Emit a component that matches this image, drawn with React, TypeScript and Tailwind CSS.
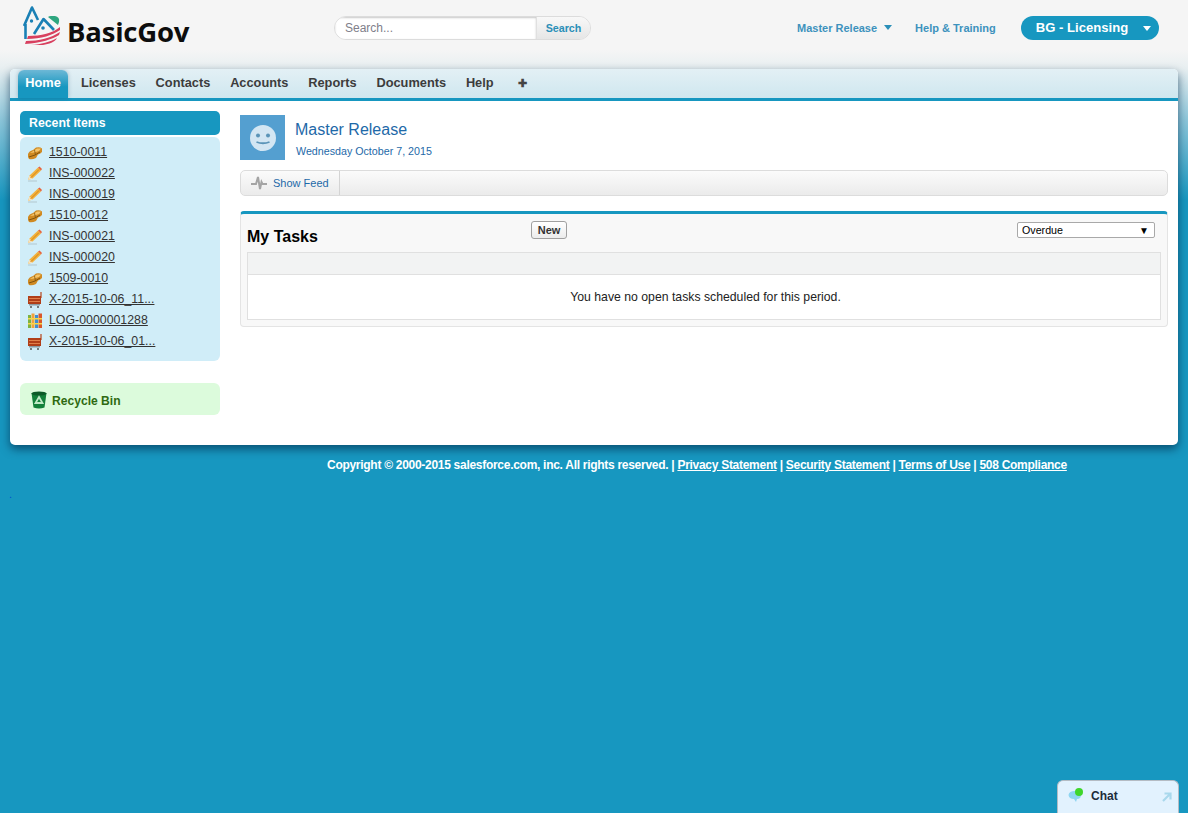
import React from 'react';

type IconKind = 'license' | 'pencil' | 'cart' | 'log';

const recentItems: { label: string; icon: IconKind }[] = [
  { label: '1510-0011', icon: 'license' },
  { label: 'INS-000022', icon: 'pencil' },
  { label: 'INS-000019', icon: 'pencil' },
  { label: '1510-0012', icon: 'license' },
  { label: 'INS-000021', icon: 'pencil' },
  { label: 'INS-000020', icon: 'pencil' },
  { label: '1509-0010', icon: 'license' },
  { label: 'X-2015-10-06_11...', icon: 'cart' },
  { label: 'LOG-0000001288', icon: 'log' },
  { label: 'X-2015-10-06_01...', icon: 'cart' },
];

const tabs = ['Licenses', 'Contacts', 'Accounts', 'Reports', 'Documents', 'Help'];

const ItemIcon = ({ kind }: { kind: IconKind }) => {
  if (kind === 'license') {
    return (
      <svg width="16" height="16" viewBox="0 0 16 16" className="shrink-0">
        <path d="M1 9 Q2 6 6 5 L9 2.5 Q13 1.5 15 3.5 L15 7 Q13 9 11 9.5 L9 13 Q5 15 2 14 Q0.5 12 1 9 Z" fill="#d08a22" />
        <path d="M3 8 L7 5.5 L10 3.5 L14 3.5 L12 6 L7 7.5 Z" fill="#f5c468" />
        <path d="M2 12 L8 10 L13 7" stroke="#80540f" strokeWidth="1" fill="none" />
        <path d="M7.5 5 L8.5 10" stroke="#80540f" strokeWidth="0.8" fill="none" />
      </svg>
    );
  }
  if (kind === 'pencil') {
    return (
      <svg width="16" height="16" viewBox="0 0 16 16" className="shrink-0">
        <path d="M1 15 L10 15" stroke="#bcd3dc" strokeWidth="1.5" />
        <path d="M1 14 L2.5 9.5 L11 1.5 L14 4.5 L5.5 12.5 Z" fill="#f2b13c" />
        <path d="M11 1.5 L12.5 0.5 L15 3 L14 4.5 Z" fill="#e8623a" />
        <path d="M1 14 L2.5 9.5 L5.5 12.5 Z" fill="#f8e2bc" />
        <path d="M3.5 12 L12 3.5" stroke="#d48518" strokeWidth="1" />
      </svg>
    );
  }
  if (kind === 'cart') {
    return (
      <svg width="16" height="16" viewBox="0 0 16 16" className="shrink-0">
        <path d="M14 0 L14 6" stroke="#b8431a" strokeWidth="1.2" />
        <rect x="1" y="4" width="13" height="8" fill="#b03e18" />
        <rect x="2" y="6" width="11" height="1" fill="#e07f4a" />
        <rect x="2" y="9" width="11" height="1" fill="#e07f4a" />
        <rect x="2" y="12" width="11" height="1.5" fill="#8a9aa0" />
        <circle cx="4" cy="15" r="1" fill="#555" />
        <circle cx="11" cy="15" r="1" fill="#555" />
      </svg>
    );
  }
  return (
    <svg width="16" height="16" viewBox="0 0 16 16" className="shrink-0">
      <rect x="1" y="2" width="3" height="13" fill="#7cb342" />
      <rect x="4.5" y="0.5" width="3" height="14.5" fill="#f2a33a" />
      <rect x="8" y="2" width="3" height="13" fill="#3f8fd2" />
      <rect x="11.5" y="0.5" width="3.5" height="14.5" fill="#d9572b" />
      <rect x="1" y="5" width="14" height="1.5" fill="#f6d64a" />
      <rect x="1" y="10" width="14" height="1.5" fill="#f6d64a" />
    </svg>
  );
};

const Logo = () => (
  <div className="flex items-end">
    <svg width="38" height="40" viewBox="0 0 38 40" className="shrink-0">
      <path d="M1 20 L9 1.5 L15 14" fill="none" stroke="#1a80b5" strokeWidth="2.6" strokeLinejoin="round" />
      <path d="M2.5 18 L2.5 33" stroke="#1a80b5" strokeWidth="2.6" />
      <path d="M11 28 L20.5 13 L31 24" fill="none" stroke="#1a80b5" strokeWidth="2.6" strokeLinejoin="round" />
      <path d="M25 11 Q26 10 28 10 L32 10 Q37 11 36 16 L35 19 Z" fill="#2ea67f" />
      <circle cx="8.5" cy="15" r="1.7" fill="#1a80b5" />
      <circle cx="20" cy="22" r="1.8" fill="#1a80b5" />
      <path d="M5 30 C18 30 30 27 37 21 L37 24 C30 29 18 33 4 33 Z" fill="#d8405f" />
      <path d="M3 35 C16 35 28 32 37 26 L36 29 C30 33 18 37 2 38 Z" fill="#d8405f" />
      <path d="M8 39 C18 38.5 27 36 34 32 C32 36 26 38 20 39 Z" fill="#d8405f" />
    </svg>
    <span className="mb-[-2px] ml-[6px] font-['Open_Sans',sans-serif] text-[27.5px] leading-[32px] font-bold tracking-[-0.2px] text-[#0d0d0d]">BasicGov</span>
  </div>
);

const Caret = ({ color }: { color: string }) => (
  <svg width="8" height="5" viewBox="0 0 8 5">
    <path d="M0 0 H8 L4 5 Z" fill={color} />
  </svg>
);

const App = () => {
  return (
    <div className="relative h-[813px] overflow-hidden bg-[linear-gradient(to_bottom,#f5f5f5_0px,#f5f5f5_50px,#e8eff1_68px,#8cc6da_120px,#1797c0_200px,#1797c0_100%)] px-[10px] font-['Liberation_Sans',Arial,sans-serif] text-[12px] text-[#222]">
      {/* header */}
      <header className="flex h-[69px] items-start">
        <div className="ml-[13px] mt-[6px] w-[311px]">
          <Logo />
        </div>
        <div className="mt-[16px] flex h-[24px] w-[257px] overflow-hidden rounded-full border border-[#dcdcdc]">
          <div className="flex w-[201px] items-center bg-white pl-[10px] text-[12px] text-[#80808a] shadow-[inset_0_1px_2px_#c8c8c8]">Search...</div>
          <div className="flex flex-1 items-center justify-center border-l border-[#e0e0e0] bg-[linear-gradient(#f8f8f8,#e6e6e6)] text-[10.7px] font-bold text-[#2a8fb8]">Search</div>
        </div>
        <div className="ml-[206px] mt-[20px] flex items-center text-[11px] font-bold text-[#3d92bd]">
          <span>Master Release</span>
          <span className="ml-[7px] mb-[1px]"><Caret color="#2a8fb8" /></span>
          <span className="ml-[23px]">Help &amp; Training</span>
        </div>
        <div className="ml-[25px] mt-[16px] flex h-[24px] w-[138px] items-center rounded-full bg-[#1797c0] pl-[15px] text-[13.1px] font-bold text-white">
          <span>BG - Licensing</span>
          <span className="ml-[15px]"><Caret color="#ffffff" /></span>
        </div>
      </header>

      {/* main panel */}
      <div className="overflow-hidden rounded-[5px] bg-white shadow-[0_4px_10px_rgba(0,40,70,0.65)]">
        <nav className="flex h-[32px] items-end border-b-[3px] border-[#1797c0] bg-[linear-gradient(#e3f0f5,#cfe7ef)] pl-[8px] text-[12.8px] font-bold text-[#3c3c3c]">
          <div className="flex h-[28px] w-[50px] items-center justify-center rounded-t-[6px] bg-[linear-gradient(#6db8d6,#1797c0_60%)] pb-[2px] text-white shadow-[0_0_4px_rgba(0,60,90,0.3)]">Home</div>
          <div className="flex h-[28px] items-center gap-[19.8px] pb-[2px] pl-[13px]">
            {tabs.map((t) => (
              <span key={t}>{t}</span>
            ))}
            <span className="ml-[5px] text-[11px] leading-none text-[#444]">✚</span>
          </div>
        </nav>

        <div className="flex h-[344px] gap-[20px] px-[10px] pt-[10px]">
          {/* sidebar */}
          <aside className="w-[200px] shrink-0">
            <div className="flex h-[24px] items-center rounded-[5px] bg-[#1797c0] pl-[9px] text-[12.3px] font-bold text-white">Recent Items</div>
            <ul className="mt-[2px] flex h-[224px] flex-col rounded-[6px] bg-[#d0edf8] pl-[7px] pt-[5px]">
              {recentItems.map((item) => (
                <li key={item.label} className="flex h-[21px] items-center gap-[6px] text-[12.35px] text-[#333]">
                  <ItemIcon kind={item.icon} />
                  <span className="underline">{item.label}</span>
                </li>
              ))}
            </ul>
            <div className="mt-[22px] flex h-[32px] items-center rounded-[6px] bg-[#dcfbdc] pl-[11px] pt-[5px] text-[12.1px] font-bold text-[#2f6a12]">
              <svg width="16" height="18" viewBox="0 0 16 18" className="mb-[3px] shrink-0">
                <path d="M0.5 2 H15.5 L13.5 16.5 Q8 18.5 2.5 16.5 Z" fill="#13803a" />
                <ellipse cx="8" cy="2.5" rx="7.5" ry="2" fill="#0c5a27" />
                <path d="M8 6 L11.5 12 H4.5 Z" fill="none" stroke="#bfe9c5" strokeWidth="1.8" />
              </svg>
              <span className="ml-[5px]">Recycle Bin</span>
            </div>
          </aside>

          {/* content */}
          <main className="min-w-0 flex-1 pt-[4px]">
            <div className="flex h-[45px]">
              <div className="flex h-[45px] w-[45px] items-center justify-center bg-[#549fd0]">
                <svg width="28" height="28" viewBox="0 0 28 28">
                  <circle cx="14" cy="14" r="13" fill="#d3e6f3" />
                  <circle cx="9" cy="11.5" r="2" fill="#5b94b8" />
                  <circle cx="19" cy="11.5" r="2" fill="#5b94b8" />
                  <path d="M7.5 18 Q14 20.5 20.5 18" fill="none" stroke="#5b94b8" strokeWidth="1.8" />
                </svg>
              </div>
              <div className="ml-[10px]">
                <div className="mt-[5px] text-[16px] leading-[20px] text-[#1e69a8]">Master Release</div>
                <div className="ml-[1px] mt-[5px] text-[10.7px] leading-[12px] text-[#1e69a8]">Wednesday October 7, 2015</div>
              </div>
            </div>

            <div className="mt-[10px] flex h-[26px] rounded-[5px] border border-[#dcdcdc] bg-[linear-gradient(#fbfbfb,#ebebeb)]">
              <div className="flex w-[99px] items-center border-r border-[#d4d4d4] pl-[10px] text-[11px] text-[#1e69a8]">
                <svg width="16" height="14" viewBox="0 0 16 14" className="shrink-0">
                  <path d="M0 8 H5 L7 1 L9 13 L10.5 6 L11.5 8 H16" fill="none" stroke="#a4a4a4" strokeWidth="2" />
                </svg>
                <span className="ml-[6px]">Show Feed</span>
              </div>
            </div>

            <section className="mt-[15px] h-[116px] rounded-[4px] border border-t-[3px] border-[#e4e4e4] border-t-[#1797c0] bg-[#f8f8f8] px-[6px]">
              <div className="flex h-[38px] items-start">
                <div className="mt-[14px] w-[284px] text-[16px] leading-[18px] font-bold text-black">My Tasks</div>
                <button className="mt-[7px] flex h-[18px] w-[36px] items-center justify-center rounded-[3px] border border-[#a0a0a0] bg-[linear-gradient(#ffffff,#ececec)] text-[11px] font-bold text-[#333]">New</button>
                <div className="ml-auto mr-[6px] mt-[8px] flex h-[16px] w-[138px] items-center justify-between rounded-[2px] border border-[#a9a9a9] bg-white pl-[4px] pr-[5px] text-[10.7px] text-black">
                  <span>Overdue</span>
                  <span className="text-[10px]">▼</span>
                </div>
              </div>
              <div className="h-[68px] border border-[#e0e0e0] bg-white">
                <div className="h-[22px] border-b border-[#e0e0e0] bg-[#f2f3f3]" />
                <div className="flex h-[44px] items-center justify-center pl-[3px] text-[12.25px] text-[#222]">You have no open tasks scheduled for this period.</div>
              </div>
            </section>
          </main>
        </div>
      </div>

      {/* footer */}
      <footer className="mt-[13px] pl-[317px] text-[12px] leading-[15px] font-bold tracking-[-0.285px] text-white">
        Copyright © 2000-2015 salesforce.com, inc. All rights reserved. | <span className="underline">Privacy Statement</span> | <span className="underline">Security Statement</span> | <span className="underline">Terms of Use</span> | <span className="underline">508 Compliance</span>
      </footer>
      <div className="ml-[-1px] mt-[15px] text-[11px] leading-[12px] text-[#0050d0]">.</div>

      {/* chat widget */}
      <div className="absolute bottom-0 right-[9px] flex h-[33px] w-[122px] items-start rounded-t-[6px] border border-b-0 border-[#b4bcc4] bg-[#e2f2fe] pl-[10px] pt-[6px]">
        <svg width="17" height="16" viewBox="0 0 17 16" className="shrink-0">
          <path d="M0.5 8 Q1 4 7 4 Q13 4 13 8 Q13 12 9 12 L8 15 L6 12 Q1 12 0.5 8 Z" fill="#8fd6f2" />
          <circle cx="11" cy="5" r="4" fill="#3fd62c" />
        </svg>
        <span className="ml-[6px] text-[12px] font-bold text-[#1c2b3a]">Chat</span>
        <svg width="10" height="10" viewBox="0 0 10 10" className="ml-[44px] mt-[5px] shrink-0">
          <path d="M1 9 L8 2 M2.5 1.5 H8.5 V7.5" fill="none" stroke="#a9d8ec" strokeWidth="2.2" />
        </svg>
      </div>
    </div>
  );
};

export default App;
